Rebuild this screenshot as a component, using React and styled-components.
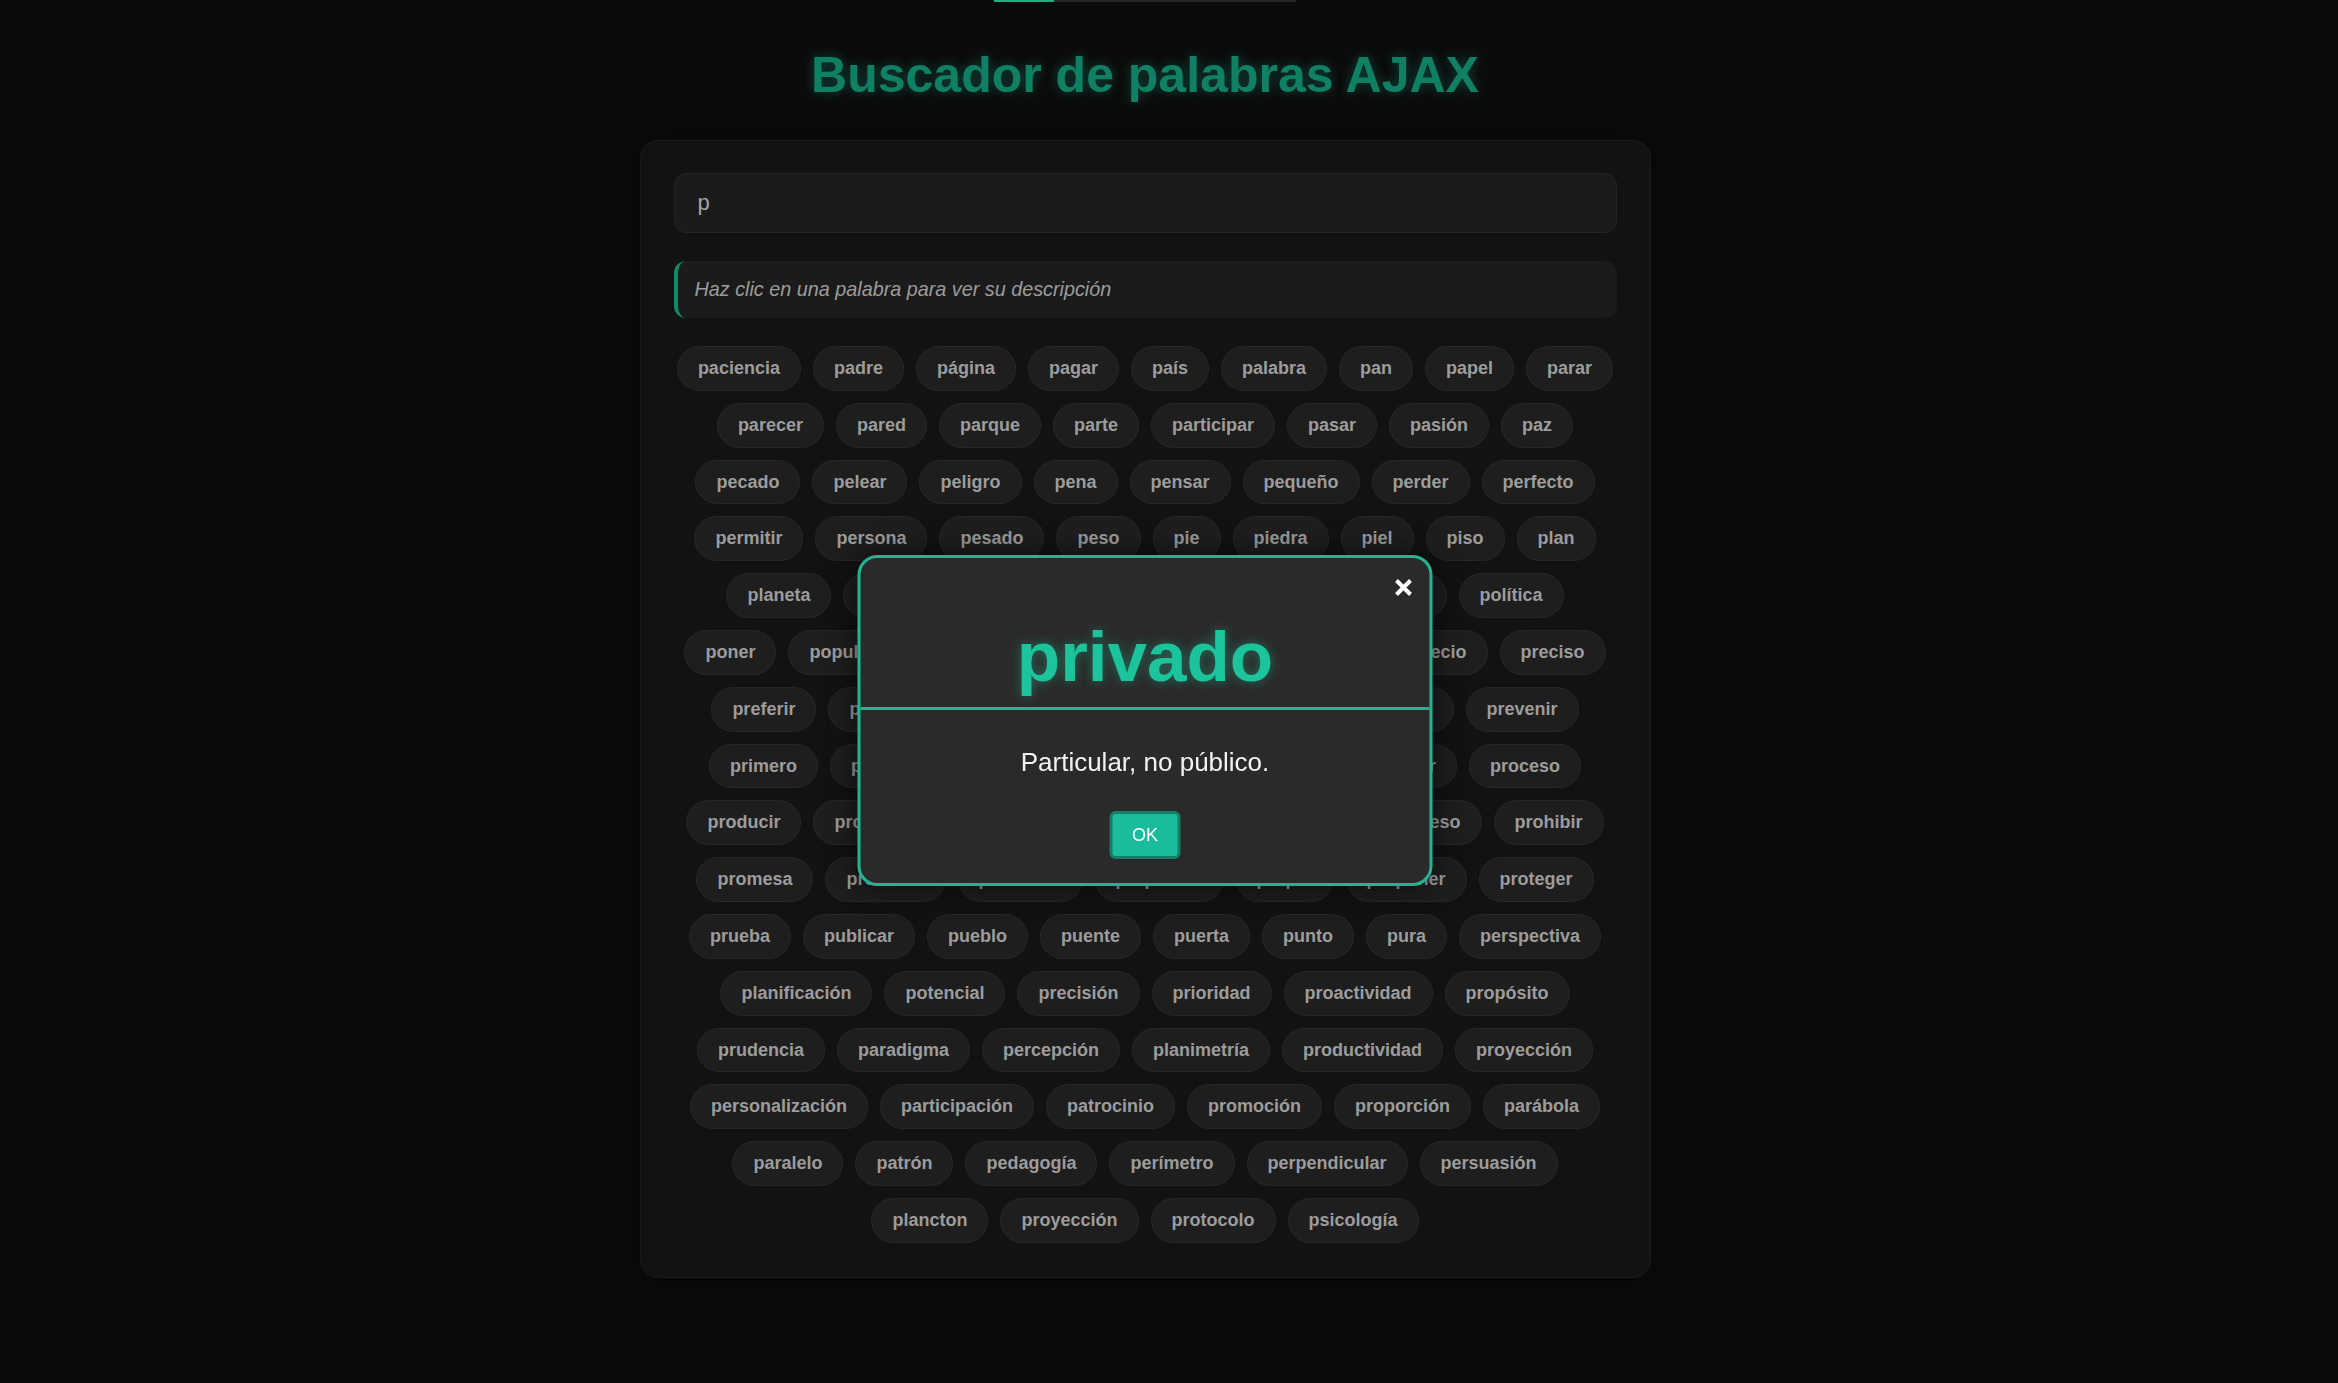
import styled, { createGlobalStyle } from "styled-components";

const GlobalStyle = createGlobalStyle`
  html, body {
    margin: 0;
    padding: 0;
    background: #0b0b0b;
    min-height: 100vh;
    font-family: "Liberation Sans", Arial, sans-serif;
  }
`;

const rows = [
  ["paciencia", "padre", "página", "pagar", "país", "palabra", "pan", "papel", "parar"],
  ["parecer", "pared", "parque", "parte", "participar", "pasar", "pasión", "paz"],
  ["pecado", "pelear", "peligro", "pena", "pensar", "pequeño", "perder", "perfecto"],
  ["permitir", "persona", "pesado", "peso", "pie", "piedra", "piel", "piso", "plan"],
  ["planeta", "playa", "plaza", "pobre", "poco", "poder", "policía", "política"],
  ["poner", "popular", "porque", "posible", "posición", "práctica", "precio", "preciso"],
  ["preferir", "pregunta", "premio", "preparar", "presente", "presentar", "prevenir"],
  ["primero", "principal", "principio", "privilegio", "problema", "probar", "proceso"],
  ["producir", "producción", "producto", "profesor", "programa", "progreso", "prohibir"],
  ["promesa", "prometer", "promover", "propiedad", "propio", "proponer", "proteger"],
  ["prueba", "publicar", "pueblo", "puente", "puerta", "punto", "pura", "perspectiva"],
  ["planificación", "potencial", "precisión", "prioridad", "proactividad", "propósito"],
  ["prudencia", "paradigma", "percepción", "planimetría", "productividad", "proyección"],
  ["personalización", "participación", "patrocinio", "promoción", "proporción", "parábola"],
  ["paralelo", "patrón", "pedagogía", "perímetro", "perpendicular", "persuasión"],
  ["plancton", "proyección", "protocolo", "psicología"],
];

const App = () => {
  return (
    <>
      <GlobalStyle />
      <StyledPage>
        <StyledProgress>
          <StyledProgressFill $width={60} />
        </StyledProgress>

        <StyledTitle>Buscador de palabras AJAX</StyledTitle>

        <StyledCard>
          <StyledSearch type="text" defaultValue="p" />
          <StyledDescription>Haz clic en una palabra para ver su descripción</StyledDescription>

          <StyledWordCloud>
            {rows.map((row, i) => (
              <StyledWordRow key={i}>
                {row.map((word, j) => (
                  <StyledChip key={j}>{word}</StyledChip>
                ))}
              </StyledWordRow>
            ))}
          </StyledWordCloud>
        </StyledCard>
      </StyledPage>

      <StyledModal>
        <StyledModalHeader>
          <StyledClose aria-label="Cerrar">
            <svg width="18" height="19" viewBox="0 0 18 19">
              <path d="M2 2.5 L16 16.5 M16 2.5 L2 16.5" stroke="#fff" strokeWidth="4" fill="none" />
            </svg>
          </StyledClose>
          <StyledWord>privado</StyledWord>
        </StyledModalHeader>
        <StyledModalBody>
          <StyledMeaning>Particular, no público.</StyledMeaning>
          <StyledOk>OK</StyledOk>
        </StyledModalBody>
      </StyledModal>
    </>
  );
};

const StyledPage = styled.div`
  padding-right: 48px;
  display: flex;
  flex-direction: column;
  align-items: center;
`;

const StyledProgress = styled.div`
  width: 302px;
  height: 2px;
  background: #262626;
`;

const StyledProgressFill = styled.div`
  width: ${(p) => p.$width}px;
  height: 100%;
  background: #1fae7e;
`;

const StyledTitle = styled.h1`
  margin: 44px 0 0;
  font-size: 50px;
  font-weight: bold;
  color: #0f8064;
  text-shadow: 0 0 12px rgba(26, 188, 156, 0.35);
`;

const StyledCard = styled.div`
  box-sizing: border-box;
  width: 1011px;
  margin-top: 36px;
  padding: 32px 33px 34px;
  background: #121212;
  border: 1px solid #1b1b1b;
  border-radius: 18px;
  box-shadow: 0 0 24px rgba(0, 0, 0, 0.5);
  display: flex;
  flex-direction: column;
`;

const StyledSearch = styled.input`
  box-sizing: border-box;
  height: 60px;
  width: 100%;
  margin: 0 0 28px;
  padding: 0 23px;
  background: #1b1b1b;
  border: 1px solid #242424;
  border-radius: 12px;
  color: #a3a3a3;
  font-family: "Liberation Sans", Arial, sans-serif;
  font-size: 22px;
  outline: none;
`;

const StyledDescription = styled.div`
  box-sizing: border-box;
  height: 57px;
  margin-bottom: 28px;
  padding: 0 17px;
  display: flex;
  align-items: center;
  background: #1b1b1b;
  border-left: 4px solid #0f8a6a;
  border-radius: 12px;
  color: #9c9c9c;
  font-style: italic;
  font-size: 19.8px;
`;

const StyledWordCloud = styled.div`
  display: flex;
  flex-direction: column;
  gap: 12px;
`;

const StyledWordRow = styled.div`
  display: flex;
  justify-content: center;
  gap: 12px;
`;

const StyledChip = styled.span`
  padding: 11px 20px;
  line-height: 20.8px;
  font-size: 18px;
  font-weight: bold;
  color: #9c9c9c;
  background: #1e1e1e;
  border: 1px solid #272727;
  border-radius: 24px;
  white-space: nowrap;
  cursor: pointer;
`;

const StyledModal = styled.div`
  position: fixed;
  top: 555px;
  left: calc(50% - 24px);
  transform: translateX(-50%);
  box-sizing: border-box;
  width: 575px;
  background: #2a2a2a;
  border: 3px solid #1fb790;
  border-radius: 20px;
  box-shadow: 0 0 30px rgba(0, 0, 0, 0.6);
  text-align: center;
`;

const StyledModalHeader = styled.div`
  position: relative;
  padding: 58px 20px 10px;
  border-bottom: 3px solid #1fb790;
`;

const StyledClose = styled.span`
  position: absolute;
  top: 20px;
  right: 17px;
  display: flex;
  cursor: pointer;
`;

const StyledWord = styled.h2`
  margin: 0;
  font-size: 71px;
  font-weight: bold;
  color: #1cc49b;
  text-shadow: 0 0 12px rgba(28, 196, 155, 0.45);
`;

const StyledModalBody = styled.div`
  padding: 37px 20px 24px;
  display: flex;
  flex-direction: column;
  align-items: center;
`;

const StyledMeaning = styled.p`
  margin: 0 0 33px;
  font-size: 26px;
  color: #f2f2f2;
`;

const StyledOk = styled.button`
  padding: 10px 19px;
  line-height: 22px;
  font-family: "Liberation Sans", Arial, sans-serif;
  font-size: 18px;
  color: #ffffff;
  background: #1abc9c;
  border: 3px solid #147f66;
  border-radius: 6px;
  cursor: pointer;
`;

export default App;
